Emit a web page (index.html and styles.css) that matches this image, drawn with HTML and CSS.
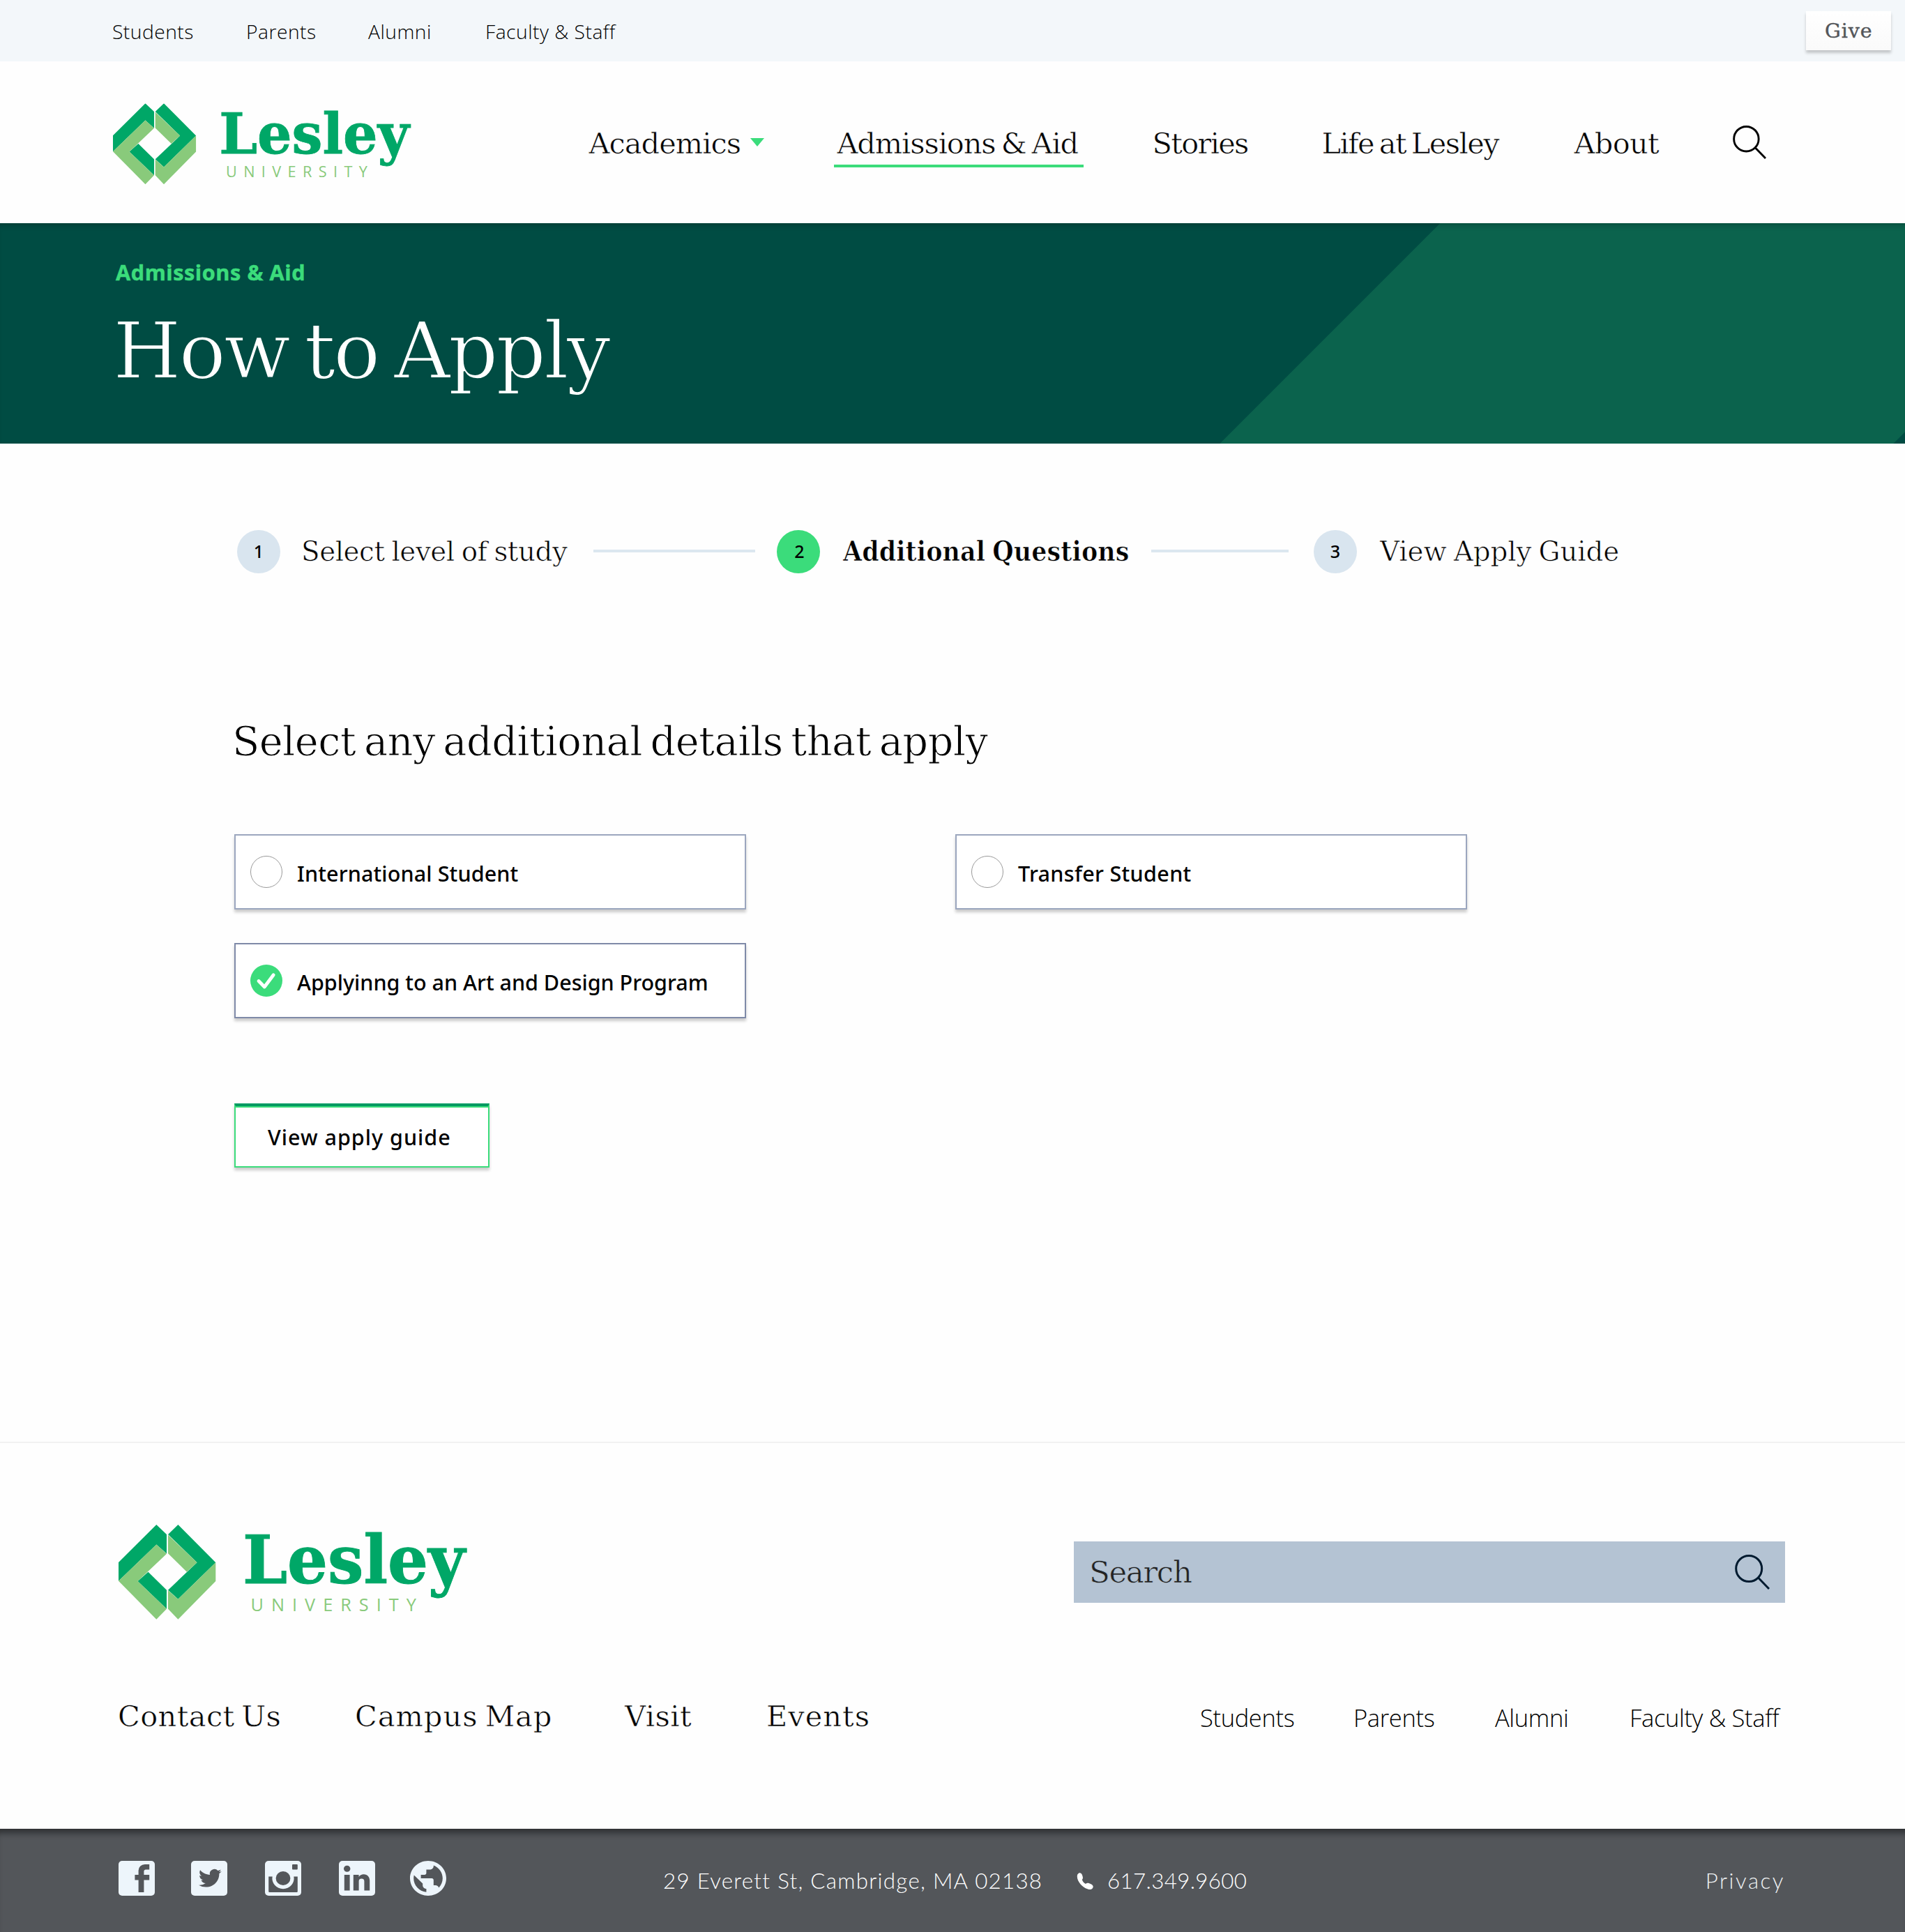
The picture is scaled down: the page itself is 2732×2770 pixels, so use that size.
FILE: index.html
```html
<!DOCTYPE html>
<html lang="en">
<head>
<meta charset="utf-8">
<title>How to Apply | Lesley University</title>
<link rel="stylesheet" href="styles.css">
</head>
<body>
<svg class="sprite" aria-hidden="true">
  <symbol id="mark" viewBox="0 0 140 136">
    <g fill="#00a767">
      <path d="M54.3 0 69 14v27.5L54.3 28.5 0 80.7V54z"/>
      <path d="M27.5 81l15-13.3 26.5 26v27z"/>
      <path d="M85.4 0l53.9 54.3-53.9 52.4L71 93.7l41.5-39.4L71 14z"/>
    </g>
    <g fill="#89ca7b">
      <path d="M54.3 28.5 69 41.7 27.5 81 69 120.7l-14.7 15L0 80.7z"/>
      <path d="M71 14.7l41.5 39.6-14.6 13.4L71 41.3z"/>
      <path d="M139.3 54.3V81l-53.9 54.7-14.4-15V94.3l14.4 12.4z"/>
    </g>
  </symbol>
  <symbol id="search" viewBox="0 0 50 50">
    <circle cx="20.200" cy="20" r="18.500" fill="none" stroke="currentColor" stroke-width="3"/>
    <path d="M33.500 33 49 49" stroke="currentColor" stroke-width="3"/>
  </symbol>
</svg>

<div class="topbar">
  <nav class="topbar-nav">
    <a>Students</a><a>Parents</a><a>Alumni</a><a>Faculty &amp; Staff</a>
  </nav>
  <a class="give">Give</a>
</div>

<header class="header">
  <svg class="header-logo" viewBox="0 0 500 140">
    <use href="#mark" width="140" height="136"/>
    <text class="logo-name" x="178" y="84" textLength="319" lengthAdjust="spacingAndGlyphs">Lesley</text>
    <text class="logo-sub" x="189.500" y="124">UNIVERSITY</text>
  </svg>
  <nav class="main-nav">
    <a>Academics<span class="caret"></span></a>
    <a class="is-active">Admissions &amp; Aid</a>
    <a>Stories</a>
    <a>Life at Lesley</a>
    <a>About</a>
    <svg class="header-search"><use href="#search"/></svg>
  </nav>
</header>

<section class="hero">
  <p class="hero-eyebrow">Admissions &amp; Aid</p>
  <h1 class="hero-title">How to Apply</h1>
</section>

<main class="main">
  <div class="stepper">
    <span class="step-number">1</span><span class="step-label">Select level of study</span><span class="step-line"></span>
    <span class="step-number is-current">2</span><span class="step-label is-current">Additional Questions</span><span class="step-line step-line-short"></span>
    <span class="step-number">3</span><span class="step-label step-label-last">View Apply Guide</span>
  </div>

  <h2 class="question">Select any additional details that apply</h2>

  <div class="options">
    <label class="option"><span class="radio"></span><span>International Student</span></label>
    <label class="option"><span class="radio"></span><span class="label-wide">Transfer Student</span></label>
    <label class="option is-selected">
      <svg class="check" viewBox="0 0 46 46"><circle cx="23" cy="23" r="23" fill="#3bdc7b"/><path d="M12 23.500l8.300 8.500L33.200 14.800" fill="none" stroke="#fff" stroke-width="4.800" stroke-linecap="round" stroke-linejoin="round"/></svg>
      <span>Applyinng to an Art and Design Program</span>
    </label>
  </div>

  <a class="button">View apply guide</a>
</main>

<footer class="footer">
  <div class="footer-top">
    <svg class="footer-logo" viewBox="0 0 500 140">
      <use href="#mark" width="140" height="136"/>
      <text class="logo-name" x="178" y="84" textLength="319" lengthAdjust="spacingAndGlyphs">Lesley</text>
      <text class="logo-sub" x="189.500" y="124">UNIVERSITY</text>
    </svg>
    <div class="search-box"><span>Search</span><svg class="search-icon"><use href="#search"/></svg></div>
  </div>
  <div class="footer-links">
    <nav class="footer-primary"><a>Contact Us</a><a>Campus Map</a><a>Visit</a><a>Events</a></nav>
    <nav class="footer-secondary"><a>Students</a><a>Parents</a><a>Alumni</a><a>Faculty &amp; Staff</a></nav>
  </div>
</footer>

<div class="bottombar">
  <div class="social">
    <svg viewBox="0 0 20 20" preserveAspectRatio="none"><rect width="20" height="20" rx="2"/><path class="cut" d="M17 2v3h-2c-.55 0-1 .45-1 1v2h3v3h-3v7h-3v-7H9V8h2V5.500A3.500 3.500 0 0 1 14.500 2z"/></svg>
    <svg viewBox="0 0 20 20" preserveAspectRatio="none"><rect width="20" height="20" rx="2"/><path class="cut" transform="translate(4.200 3.600) scale(.525)" d="M23.953 4.570a10 10 0 01-2.825.775 4.958 4.958 0 002.163-2.723c-.951.555-2.005.959-3.127 1.184a4.920 4.920 0 00-8.384 4.482C7.690 8.095 4.067 6.130 1.640 3.162a4.822 4.822 0 00-.666 2.475c0 1.710.870 3.213 2.188 4.096a4.904 4.904 0 01-2.228-.616v.060a4.923 4.923 0 003.946 4.827 4.996 4.996 0 01-2.212.085 4.936 4.936 0 004.604 3.417 9.867 9.867 0 01-6.102 2.105c-.390 0-.779-.023-1.170-.067a13.995 13.995 0 007.557 2.209c9.053 0 13.998-7.496 13.998-13.985 0-.210 0-.420-.015-.630A9.935 9.935 0 0024 4.590z"/></svg>
    <svg viewBox="0 0 20 20" preserveAspectRatio="none"><rect width="20" height="20" rx="2"/><path class="cut" d="M2 9h2.100A6 6 0 1 0 15.900 9H18v8.500a.5.5 0 0 1-.5.5h-15a.5.5 0 0 1-.5-.5z"/><circle class="cut" cx="10" cy="10" r="4"/><rect class="cut" x="15" y="2" width="3" height="3" rx=".4"/></svg>
    <svg viewBox="0 0 20 20" preserveAspectRatio="none"><rect width="20" height="20" rx="2"/><circle class="cut" cx="4.500" cy="4.500" r="1.800"/><path class="cut" d="M3 8h3v9H3zM8 8h3v1.200c.6-1 1.600-1.500 2.700-1.500 2.100 0 3.300 1.600 3.300 3.600V17h-3v-5.300a1.500 1.500 0 0 0-3 0V17H8z"/></svg>
    <svg viewBox="2 2 20 20" preserveAspectRatio="none"><path d="M12 2C6.480 2 2 6.480 2 12s4.480 10 10 10 10-4.480 10-10S17.520 2 12 2zm-1 17.930c-3.950-.490-7-3.850-7-7.930 0-.620.080-1.210.210-1.790L9 15v1c0 1.100.9 2 2 2v1.930zm6.900-2.540c-.260-.810-1-1.390-1.900-1.390h-1v-3c0-.550-.450-1-1-1H8v-2h2c.550 0 1-.450 1-1V7h2c1.100 0 2-.9 2-2v-.410c2.930 1.190 5 4.060 5 7.410 0 2.080-.8 3.970-2.100 5.390z"/></svg>
  </div>
  <div class="contact">
    <span class="address">29 Everett St, Cambridge, MA 02138</span>
    <svg class="phone" viewBox="0 0 24 24"><path d="M3 .8C6-.8 8 2 8.800 6c.6 3-1 4-1 4 1 3 3 5 5.200 6 0 0 1.500-2 4.500-1 4 1.200 7 3.500 6 6-1 3-4 4-8 2.300C8 21 .5 12 .8 5c0-2 1-3.500 2.200-4.200z"/></svg>
    <span class="phone-number">617.349.9600</span>
  </div>
  <a class="privacy">Privacy</a>
</div>
</body>
</html>
```
FILE: styles.css
```css
* { box-sizing: border-box; }

:root {
  --serif: "DejaVu Serif", serif;
  --serif-condensed: "DejaVu Serif Condensed", "DejaVu Serif", serif;
  --sans: "Open Sans", sans-serif;
  --page: #fefefe;
  --green: #3bdc7b;
}

body {
  margin: 0;
  background: var(--page);
  color: #000;
  font-family: var(--sans);
  white-space: nowrap;
}

h1, h2, p { margin: 0; font-weight: 400; }

.sprite { display: block; width: 0; height: 0; }

.logo-name {
  font: 700 95px var(--serif);
  fill: #00a767;
  stroke: #00a767;
  stroke-width: 1px;
}
.logo-sub { font: 400 25.300px var(--sans); letter-spacing: 11px; fill: #89ca7b; }

/* Top bar */
.topbar {
  height: 88px;
  padding: 0 20px 0 161px;
  display: flex;
  justify-content: space-between;
  align-items: center;
  background: #f3f7fa;
}

.topbar-nav {
  display: grid;
  grid-template-columns: 192px 175px 168px auto;
  font-size: 28.200px;
  font-weight: 300;
  line-height: 46px;
  letter-spacing: .5px;
  padding-top: 2px;
}

.give {
  width: 122px;
  height: 56px;
  padding-left: 27px;
  background: linear-gradient(#fff, #fafafa);
  box-shadow: 0 4px 4px rgba(0, 0, 0, .2);
  color: #53565a;
  font: 28.500px/57px var(--serif);
  letter-spacing: .9px;
  -webkit-text-stroke: .4px #53565a;
}

/* Header: thin outline in the page colour lightens the slab face */
.header {
  height: 232px;
  padding: 0 0 0 162px;
  display: flex;
}

.header-logo { width: 427.500px; height: 120px; margin-top: 60px; overflow: visible; }

.main-nav {
  display: grid;
  grid-template-columns: 356px 452px 243px 362px 227px 50px;
  margin: 92px 0 0 255px;
  height: 60px;
  font: 41.500px/51px var(--serif);
  -webkit-text-stroke: .6px var(--page);
  word-spacing: -4px;
}

.main-nav a:nth-child(1) { letter-spacing: -.950px; }
.main-nav a:nth-child(2) { letter-spacing: -1.100px; }
.main-nav a:nth-child(3) { letter-spacing: -1.700px; }
.main-nav a:nth-child(4) { letter-spacing: -1.550px; }
.main-nav a:nth-child(5) { letter-spacing: -.7px; }

.main-nav .is-active {
  width: 358px;
  height: 60px;
  margin-left: -5px;
  padding-left: 5px;
  border-bottom: 4px solid var(--green);
}

.caret {
  display: inline-block;
  margin-left: 14px;
  vertical-align: 10px;
  border: 10px solid transparent;
  border-top: 12px solid var(--green);
  border-bottom: 0;
}

.header-search { width: 48px; height: 48px; }

/* Hero: diagonal band on a dark ground */
.hero {
  height: 316px;
  padding: 48px 0 0 166px;
  background: linear-gradient(135deg, #004c43 1460px, #0b634d 1461px, #0b634d 2143px, #004c43 2144px);
  box-shadow: inset 0 8px 8px -6px rgba(0, 0, 0, .25);
}

.hero-eyebrow {
  color: var(--green);
  font-size: 30.600px;
  font-weight: 700;
  line-height: 44px;
  letter-spacing: .6px;
  -webkit-text-stroke: .5px var(--green);
}

.hero-title {
  margin: 21px 0 0 -4px;
  color: #fff;
  font: 112px/140px var(--serif);
  letter-spacing: -3.100px;
  word-spacing: -10px;
  -webkit-text-stroke: 2px #004c43;
}

/* Main */
.main { height: 1431px; padding: 124px 0 0 336px; }

.stepper {
  display: grid;
  grid-template-columns: 92px 419px 263px 95px 442px 233px 95px auto;
  align-items: center;
  height: 62px;
  margin-left: 4px;
}

.step-number {
  width: 62px;
  height: 62px;
  border-radius: 50%;
  background: #d9e5ef;
  font: 500 25px/61px "Noto Sans", sans-serif;
  text-align: center;
}
.step-number.is-current { background: var(--green); padding-left: 3px; }

.step-label {
  font: 38.800px/60px var(--serif);
  letter-spacing: -.450px;
  word-spacing: -2px;
  -webkit-text-stroke: .7px var(--page);
}
.step-label.is-current {
  font-family: var(--serif-condensed);
  font-weight: 700;
  letter-spacing: .1px;
}
.step-label-last { letter-spacing: -.1px; }

.step-line { width: 232px; height: 4px; margin-bottom: 2px; background: #dce7f0; }
.step-line-short { width: 197px; }

.question {
  margin: 207px 0 0 -3px;
  font: 57.500px/70px var(--serif);
  letter-spacing: -.650px;
  word-spacing: -6px;
  -webkit-text-stroke: 1px var(--page);
}

.options {
  display: grid;
  grid-template-columns: 734px 734px;
  gap: 48px 300px;
  margin-top: 97px;
}

.option {
  height: 108px;
  padding: 0 0 0 21px;
  display: flex;
  align-items: center;
  gap: 21px;
  background: #fff;
  border: 2px solid #9ba6be;
  box-shadow: 0 4px 4px rgba(0, 0, 0, .2);
  font: 500 30.500px/44px "Noto Sans", sans-serif;
  letter-spacing: .130px;
}
.option span:last-child { padding-top: 4px; }
.option .label-wide { letter-spacing: .330px; }
.option.is-selected { border-color: #7f8aa8; letter-spacing: -.010px; }

.radio { width: 46px; height: 46px; border: 1.500px solid #999; border-radius: 50%; }
.check { width: 46px; height: 46px; }

.button {
  display: block;
  width: 366px;
  height: 92px;
  margin-top: 122px;
  padding-left: 46px;
  background: #fff;
  border: 2px solid var(--green);
  border-top: 4px solid #009a62;
  box-shadow: inset 0 2px var(--green), 0 4px 4px rgba(0, 0, 0, .2);
  font: 500 30.500px/88px "Noto Sans", sans-serif;
  letter-spacing: 1px;
}

/* Footer */
.footer {
  height: 555px;
  padding: 117px 172px 0 170px;
  border-top: 2px solid #f2f2f2;
}

.footer-top { display: flex; justify-content: space-between; height: 140px; }
.footer-logo { width: 500px; height: 140px; overflow: visible; }

.search-box {
  width: 1020px;
  height: 88px;
  margin-top: 24px;
  padding: 0 22px;
  display: flex;
  justify-content: space-between;
  align-items: center;
  background: #b4c3d3;
  color: #222;
  font: 43.500px/88px var(--serif);
  letter-spacing: -1.350px;
  -webkit-text-stroke: .7px #b4c3d3;
}
.search-icon { width: 50px; height: 50px; color: #001a2f; }

.footer-links { display: flex; justify-content: space-between; margin-top: 106px; }

.footer-primary {
  display: grid;
  grid-template-columns: 340px 387px 203px auto;
  margin-left: -1px;
  font: 41.500px/58px var(--serif);
  word-spacing: -4px;
  -webkit-text-stroke: .6px var(--page);
}
.footer-primary a:nth-child(1) { letter-spacing: .4px; }
.footer-primary a:nth-child(2) { letter-spacing: 1px; }
.footer-primary a:nth-child(3) { letter-spacing: .5px; }
.footer-primary a:nth-child(4) { letter-spacing: 1px; }

.footer-secondary {
  display: grid;
  grid-template-columns: 220px 203px 193px 223px;
  font-size: 34.500px;
  font-weight: 300;
  line-height: 62px;
  letter-spacing: -.350px;
}

.bottombar {
  height: 148px;
  padding: 0 172px 0 170px;
  display: flex;
  align-items: center;
  background: #53565a;
  box-shadow: inset 0 12px 10px -6px rgba(0, 0, 0, .45);
  color: #fff;
  font: 300 31.300px/148px Lato, sans-serif;
}

.social { display: grid; grid-template-columns: 104px 106px 106px 102px 52px; margin-bottom: 6px; }
.social svg { width: 52px; height: 50px; fill: #edf5fb; }
.social .cut { fill: #53565a; }

.contact { display: flex; align-items: center; margin-left: 311px; }
.address { width: 593px; letter-spacing: 1.280px; }
.phone { width: 24px; height: 24px; margin: 2px 20px 0 0; fill: #fff; }
.phone-number { letter-spacing: .350px; }

.privacy { margin-left: auto; letter-spacing: 2.500px; color: #edf0f2; }
```
